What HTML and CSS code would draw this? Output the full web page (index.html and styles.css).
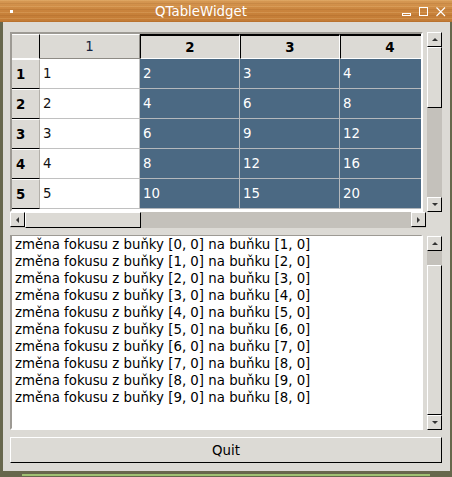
FILE: index.html
```html
<!DOCTYPE html>
<html lang="cs">
<head>
    <meta charset="UTF-8">
    <title>QTableWidget</title>
    <link rel="stylesheet" href="styles.css">
</head>
<body>
<div class="window">
    <div class="titlebar">
        <span class="menu-dot"></span>
        <span class="title">QTableWidget</span>
        <div class="wm-buttons">
            <svg width="10" height="10" viewBox="0 0 10 10"><rect x="0.5" y="6.5" width="8" height="2" fill="none" stroke="#fff"/></svg>
            <svg width="10" height="10" viewBox="0 0 10 10"><rect x="0.5" y="0.5" width="8" height="8" fill="none" stroke="#fff"/></svg>
            <svg width="10" height="10" viewBox="0 0 10 10"><path d="M0.5 0.5 L9 9 M9 0.5 L0.5 9" stroke="#fff" stroke-width="1.1"/></svg>
        </div>
    </div>

    <div class="client">
        <div class="table-block">
            <div class="table-row">
                <div class="frame table-frame">
                    <div class="grid">
                        <div class="hdr corner"></div>
                        <div class="hdr col">1</div>
                        <div class="hdr col sel">2</div>
                        <div class="hdr col sel">3</div>
                        <div class="hdr col sel">4</div>

                        <div class="hdr rowh">1</div>
                        <div class="cell">1</div>
                        <div class="cell on">2</div>
                        <div class="cell on">3</div>
                        <div class="cell on">4</div>

                        <div class="hdr rowh">2</div>
                        <div class="cell">2</div>
                        <div class="cell on">4</div>
                        <div class="cell on">6</div>
                        <div class="cell on">8</div>

                        <div class="hdr rowh">3</div>
                        <div class="cell">3</div>
                        <div class="cell on">6</div>
                        <div class="cell on">9</div>
                        <div class="cell on">12</div>

                        <div class="hdr rowh">4</div>
                        <div class="cell">4</div>
                        <div class="cell on">8</div>
                        <div class="cell on">12</div>
                        <div class="cell on">16</div>

                        <div class="hdr rowh">5</div>
                        <div class="cell">5</div>
                        <div class="cell on">10</div>
                        <div class="cell on">15</div>
                        <div class="cell on">20</div>
                    </div>
                </div>
                <div class="vscroll">
                    <div class="sbtn"><span class="arrow up"></span></div>
                    <div class="slider table-vslider"></div>
                    <div class="trough"></div>
                    <div class="sbtn"><span class="arrow down"></span></div>
                </div>
            </div>
            <div class="hscroll">
                <div class="sbtn"><span class="arrow left"></span></div>
                <div class="slider table-hslider"></div>
                <div class="trough"></div>
                <div class="sbtn"><span class="arrow right"></span></div>
            </div>
        </div>

        <div class="log-block">
            <div class="frame log">
                <div>změna fokusu z buňky [0, 0] na buňku [1, 0]</div>
                <div>změna fokusu z buňky [1, 0] na buňku [2, 0]</div>
                <div>změna fokusu z buňky [2, 0] na buňku [3, 0]</div>
                <div>změna fokusu z buňky [3, 0] na buňku [4, 0]</div>
                <div>změna fokusu z buňky [4, 0] na buňku [5, 0]</div>
                <div>změna fokusu z buňky [5, 0] na buňku [6, 0]</div>
                <div>změna fokusu z buňky [6, 0] na buňku [7, 0]</div>
                <div>změna fokusu z buňky [7, 0] na buňku [8, 0]</div>
                <div>změna fokusu z buňky [8, 0] na buňku [9, 0]</div>
                <div>změna fokusu z buňky [9, 0] na buňku [8, 0]</div>
            </div>
            <div class="vscroll">
                <div class="sbtn"><span class="arrow up"></span></div>
                <div class="trough log-gap"></div>
                <div class="slider log-slider"></div>
                <div class="sbtn"><span class="arrow down"></span></div>
            </div>
        </div>

        <button class="quit" type="button">Quit</button>
    </div>

    <div class="bottom-border"><span class="bar"></span></div>
</div>
</body>
</html>
```

FILE: styles.css
```css
body {
    margin: 0;
    font-family: "DejaVu Sans", sans-serif;
    font-size: 13.33px;
}

.window {
    width: 452px;
    height: 477px;
    box-sizing: border-box;
    background-color: #dcdad5;
    border-left: 3px solid #67674c;
    border-right: 2px solid #67674c;
    display: flex;
    flex-direction: column;
}

/* title bar */
.titlebar {
    height: 22px;
    margin-left: -3px;
    margin-right: -2px;
    display: flex;
    align-items: center;
    background-color: #cc8a43;
    background-image:
        repeating-linear-gradient(180deg, rgba(255, 220, 160, 0.18) 0 1px, transparent 1px 3px, rgba(120, 60, 10, 0.12) 3px 4px, transparent 4px 6px),
        linear-gradient(180deg, #d79a55 0%, #c9833c 50%, #c27a34 100%);
}

.menu-dot {
    width: 3px;
    height: 3px;
    background: #fff;
    margin-left: 10px;
}

.title {
    flex: 1;
    text-align: center;
    color: #fff;
    font-size: 13.33px;
    margin-right: 13px;
}

.wm-buttons {
    display: flex;
    gap: 7px;
    margin-right: 6px;
    margin-top: 1px;
}

/* client area */
.client {
    flex: 1;
    padding: 10px 8px 0 7px;
    display: flex;
    flex-direction: column;
}

.frame {
    box-sizing: border-box;
    border: 2px solid;
    border-color: #9d9a94 #fff #fff #9d9a94;
    background: #fff;
    overflow: hidden;
}

.table-row {
    display: flex;
    gap: 4px;
    height: 180px;
}

.table-frame {
    width: 413px;
}

.grid {
    display: grid;
    grid-template-columns: 28px 100px 100px 100px 100px;
    grid-template-rows: 25px repeat(5, 30px);
    background: #dcdad5;
}

.hdr {
    box-sizing: border-box;
    background: #dcdad5;
    font-weight: bold;
    display: flex;
    align-items: center;
    color: #000;
}

.corner {
    border-top: 1px solid #fff;
    border-right: 1px solid #000;
    border-bottom: 1px solid #fff;
}

.col {
    justify-content: center;
    border-top: 1px solid #fff;
    border-right: 1px solid #8e8b85;
    border-bottom: 1px solid #8e8b85;
    font-weight: normal;
    color: #14243f;
}

.col.sel {
    font-weight: bold;
    color: #000;
    border-top: 2px solid #000;
    border-left: 1px solid #000;
    border-right: 1px solid #fff;
    border-bottom: 1px solid #fff;
}

.rowh {
    padding-left: 4px;
    border-top: 1px solid #fff;
    border-right: 1px solid #b3b0aa;
    border-bottom: 1px solid #000;
}

.cell {
    box-sizing: border-box;
    display: flex;
    align-items: center;
    padding-left: 3px;
    background: #fff;
    color: #111;
    border-right: 1px solid #c0c0c0;
    border-bottom: 1px solid #c0c0c0;
}

.cell.on {
    background: #4b6983;
    color: #fff;
    border-color: #b4b8bc;
}

/* scrollbars */
.vscroll {
    width: 15px;
    display: flex;
    flex-direction: column;
    background: #c4c1bb;
}

.hscroll {
    width: 416px;
    height: 16px;
    display: flex;
    background: #c4c1bb;
}

.sbtn,
.slider {
    box-sizing: border-box;
    background: #dcdad5;
    border: 1px solid;
    border-color: #fff #000 #000 #fff;
    flex-shrink: 0;
}

.sbtn {
    width: 15px;
    height: 15px;
    display: flex;
    align-items: center;
    justify-content: center;
}

.trough {
    flex: 1;
}

.table-vslider {
    height: 61px;
}

.table-hslider {
    width: 116px;
}

.log-gap {
    flex: 0 0 14px;
}

.log-slider {
    flex: 1;
}

.arrow {
    width: 0;
    height: 0;
    border: 3px solid transparent;
}

.arrow.up {
    border-bottom-color: #333;
    border-top-width: 0;
}

.arrow.down {
    border-top-color: #333;
    border-bottom-width: 0;
}

.arrow.left {
    border-right-color: #333;
    border-left-width: 0;
}

.arrow.right {
    border-left-color: #333;
    border-right-width: 0;
}

/* log */
.log-block {
    display: flex;
    gap: 4px;
    margin-top: 7px;
    height: 195px;
}

.log {
    width: 413px;
    padding: 0 3px;
    line-height: 17px;
    color: #000;
    border-top-width: 1px;
}

.log-block .vscroll {
    margin-top: 1px;
}

/* quit button */
.quit {
    margin-top: 7px;
    height: 26px;
    width: 432px;
    background: #dcdad5;
    border: 1px solid;
    border-color: #fff #000 #000 #fff;
    font-family: "DejaVu Sans", sans-serif;
    font-size: 13.33px;
    color: #000;
    padding: 0;
}

.bottom-border {
    height: 6px;
    margin: 8px -2px 0 -3px;
    background: #67674c;
    display: flex;
    align-items: flex-end;
    padding-bottom: 1px;
    box-sizing: border-box;
}

.bar {
    display: block;
    width: 408px;
    height: 2px;
    margin-left: 22px;
    background: #9fc173;
}
```
